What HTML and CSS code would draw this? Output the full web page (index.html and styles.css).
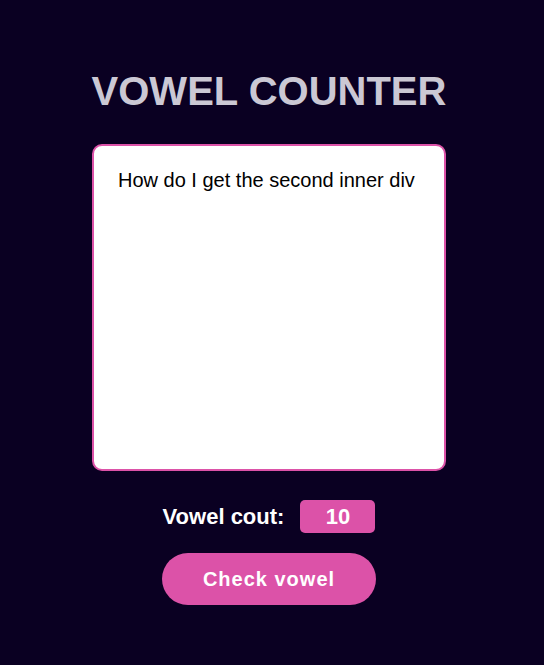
FILE: index.html
```html
<!DOCTYPE html>
<html lang="en">
<head>
<meta charset="utf-8">
<title>Vowel Counter</title>
<link rel="stylesheet" href="styles.css">
</head>
<body>
<main class="app">
  <h1 class="title">VOWEL COUNTER</h1>
  <textarea class="input" spellcheck="false">How do I get the second inner div</textarea>
  <div class="result">
    <span class="result-label">Vowel cout:</span>
    <span class="result-count">10</span>
  </div>
  <button class="check-btn" type="button">Check vowel</button>
</main>
</body>
</html>
```
FILE: styles.css
```css
html, body {
  margin: 0;
  padding: 0;
  background: #0a0022;
  height: 100%;
}
body {
  font-family: "Liberation Sans", Arial, sans-serif;
}
.app {
  display: flex;
  flex-direction: column;
  align-items: center;
  padding: 68px 6px 0 0;
}
.title {
  margin: 0;
  font-size: 40px;
  line-height: 46px;
  font-weight: bold;
  color: #cbc8d4;
}
.input {
  box-sizing: border-box;
  margin-top: 30px;
  width: 354px;
  height: 327px;
  padding: 23px 24px;
  border: 2px solid #dc52a8;
  border-radius: 10px;
  background: #fff;
  font-family: "Liberation Sans", Arial, sans-serif;
  font-size: 20px;
  line-height: normal;
  color: #000;
  resize: none;
  outline: none;
}
.result {
  display: flex;
  align-items: center;
  gap: 16px;
  margin-top: 29px;
}
.result-label {
  color: #fff;
  font-size: 22px;
  font-weight: bold;
}
.result-count {
  box-sizing: border-box;
  width: 75px;
  height: 33px;
  display: flex;
  align-items: center;
  justify-content: center;
  background: #dc52a8;
  border-radius: 5px;
  color: #fff;
  font-size: 22px;
  font-weight: bold;
}
.check-btn {
  margin-top: 20px;
  width: 214px;
  height: 52px;
  border: none;
  border-radius: 26px;
  background: #dc52a8;
  color: #fff;
  font-family: "Liberation Sans", Arial, sans-serif;
  font-size: 20px;
  font-weight: bold;
  letter-spacing: 1px;
  cursor: pointer;
}
```
